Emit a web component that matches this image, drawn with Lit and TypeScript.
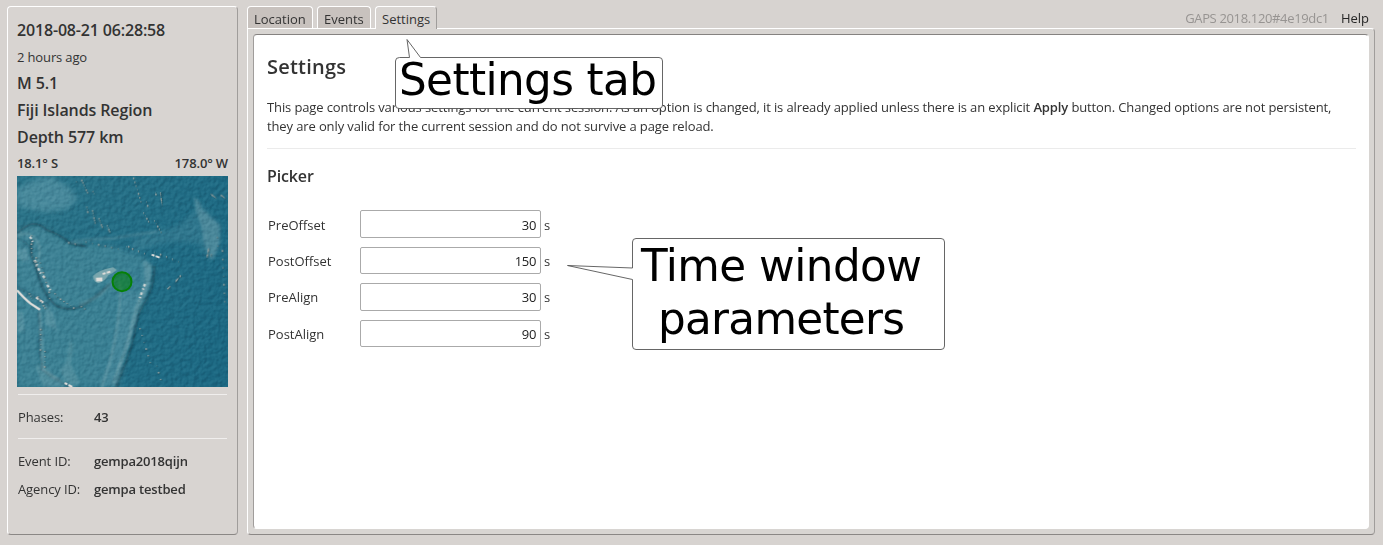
import { LitElement, html, svg, css } from "lit";
import { customElement } from "lit/decorators.js";

// Deterministic speckles scattered along seamount chains.
const chains: number[][] = [
  [205, 30, 248, 75], [232, 110, 260, 155], [265, 148, 300, 185], [365, 30, 410, 110], [440, 65, 462, 100],
  [400, 130, 455, 185], [385, 480, 450, 630], [180, 215, 350, 235], [350, 230, 508, 272], [60, 200, 78, 290],
  [78, 270, 130, 375], [475, 355, 515, 315], [600, 75, 645, 85], [125, 380, 220, 420], [60, 370, 110, 410],
  [90, 480, 105, 590], [590, 240, 600, 260], [625, 200, 650, 390],
];
const specks = chains.flatMap(([x1, y1, x2, y2], c) =>
  Array.from({ length: 9 }, (_, i) => {
    const t = i / 8;
    const j = ((i * 37 + c * 17) % 13) - 6;
    return { x: x1 + (x2 - x1) * t + j, y: y1 + (y2 - y1) * t - j * 0.8, r: 1.1 + ((i * 7 + c) % 4) * 0.45 };
  })
);

@customElement("region-map")
class RegionMap extends LitElement {
  static styles = css`
    :host { display: block; width: 211px; height: 211px; }
    svg { display: block; }
    .relief { mix-blend-mode: soft-light; }
  `;
  render() {
    return html`<svg width="211" height="211" viewBox="21 18 633 633">
      <defs>
        <linearGradient id="sea" x1="0" y1="0.3" x2="1" y2="0.6">
          <stop offset="0" stop-color="#2b7388" /><stop offset=".55" stop-color="#226d85" /><stop offset="1" stop-color="#1c6882" />
        </linearGradient>
        <filter id="b3" filterUnits="userSpaceOnUse" x="0" y="0" width="680" height="680"><feGaussianBlur stdDeviation="2.4" /></filter>
        <filter id="b8" filterUnits="userSpaceOnUse" x="0" y="0" width="680" height="680"><feGaussianBlur stdDeviation="8" /></filter>
        <filter id="b1" filterUnits="userSpaceOnUse" x="0" y="0" width="680" height="680"><feGaussianBlur stdDeviation="1" /></filter>
        <filter id="relief" x="0" y="0" width="1" height="1" color-interpolation-filters="sRGB">
          <feTurbulence type="fractalNoise" baseFrequency="0.07 0.07" numOctaves="3" seed="8" result="n" />
          <feColorMatrix in="n" type="matrix" values="0 0 0 0 0  0 0 0 0 0  0 0 0 0 0  1 0 0 0 0" />
          <feDiffuseLighting surfaceScale="6" lighting-color="#ffffff"><feDistantLight azimuth="225" elevation="30" /></feDiffuseLighting>
        </filter>
      </defs>
      <rect x="21" y="18" width="633" height="633" fill="url(#sea)" />
      <g filter="url(#b8)" fill="#5a98a8">
        <path opacity=".6" d="M21 60 60 35 120 18 180 55 203 88 170 118 110 127 50 115 21 105Z" />
        <path opacity=".42" d="M21 175 65 160 105 170 185 222 300 225 400 260 433 290 415 370 382 430 360 520 328 651H21Z" />
        <path opacity=".25" d="M370 205 500 170 550 130 560 90 590 120 630 165 625 245 600 270 560 220 480 215 370 245Z" />
      </g>
      <g filter="url(#b3)" fill="#79a9b4">
        <path opacity=".38" d="M550 80 567 92 575 115 595 135 630 165 630 215 610 270 595 258 580 215 575 175 558 120Z" />
        <path opacity=".35" d="M21 240 50 235 60 270 40 275 21 260ZM105 400 130 430 142 480 105 465ZM21 420 40 430 45 480 21 490Z" />
        <path opacity=".3" d="M180 505 190 530 182 580 210 640 175 651 150 600 170 570ZM75 590 95 580 130 615 195 651H100Z" />
        <path opacity=".15" d="M333 365 385 365 375 445 345 540 320 651H265L300 560Z" />
        <path opacity=".45" d="M400 270 425 285 422 340 385 430 360 520 335 580 300 651 345 540 380 410 405 340Z" />
      </g>
      <g fill="none" stroke-linecap="round" filter="url(#b3)">
        <path stroke="#123f50" stroke-opacity=".7" stroke-width="6" d="M21 190Q45 165 70 161Q95 163 110 180Q145 190 185 222L225 228M65 210Q58 240 70 270L88 325Q102 380 140 408Q180 428 225 404Q260 380 295 345M433 290Q433 345 412 385Q385 425 380 460Q370 530 328 625L318 651" />
        <path stroke="#174b5e" stroke-opacity=".55" stroke-width="5" d="M25 207Q50 215 62 235M21 350Q70 375 115 405M85 430Q92 480 87 540L96 600Q130 625 180 651" />
        <path stroke="#99b9bf" stroke-opacity=".42" stroke-width="5" d="M21 200Q50 180 75 205Q100 235 80 280L120 355M331 340Q330 430 318 490Q308 560 275 651M408 340Q375 410 364 470Q348 540 310 640M90 425 97 530 100 600 145 630" />
        <path stroke="#82abb5" stroke-opacity=".25" stroke-width="10" d="M190 215Q250 205 310 205Q370 195 440 185M310 330Q270 390 210 400" />
      </g>
      <rect class="relief" x="21" y="18" width="633" height="633" filter="url(#relief)" opacity=".2" />
      <path fill="#89b0b5" opacity=".8" filter="url(#b1)" d="M249 318Q265 300 310 292L320 300Q310 310 295 316Q285 335 265 340Q250 335 249 318Z" />
      <g fill="none" stroke="#e0deda" filter="url(#b1)">
        <path stroke-width="7" d="M21 361Q45 388 62 401L90 419" />
        <path stroke-width="6" stroke-dasharray="9 4 14 7" d="M278 312 301 305M78 382 100 398M425 254 449 263M164 639 187 651" />
        <path stroke-width="7" stroke-dasharray="8 6 4 9" opacity=".85" d="M60 200 70 218M74 270 90 307 105 325M112 345 124 367M405 342 386 393" />
        <path stroke-width="11" d="M258 329 277 328" />
      </g>
      <g>${specks.map((s) => svg`<circle cx=${s.x + 1.5} cy=${s.y + 1.5} r=${s.r + 0.9} fill="#153f4c" opacity=".5"/><circle cx=${s.x} cy=${s.y} r=${s.r + 0.3} fill="#b3b5b0" opacity=".8"/>`)}</g>
      <circle cx="336" cy="335" r="28" fill="#008000" fill-opacity=".5" />
      <circle cx="336" cy="335" r="28.5" fill="none" stroke="#068006" stroke-width="6" />
    </svg>`;
  }
}

@customElement("app-root")
class AppRoot extends LitElement {
  static styles = css`
    :host { display: block; height: 545px; overflow: hidden; background: #d7d3d0; color: #333; font: 13px/19px "Open Sans", sans-serif; }
    * { box-sizing: border-box; }
    .page { display: flex; gap: 9px; height: 545px; padding: 6px 8px 10px 7px; position: relative; }
    .raised { border: 1px solid; border-color: #fff #a09d9b #8a8785 #fff; border-radius: 4px; background: #d8d4d1; }
    .side { width: 231px; padding: 10px 9px 0; }
    .big, .line { height: 27px; line-height: 27px; }
    .big { font-size: 16px; font-weight: 600; letter-spacing: -0.1px; }
    .date { letter-spacing: -0.17px; }
    .line { height: 26px; line-height: 26px; letter-spacing: -0.14px; }
    .coords { display: flex; justify-content: space-between; font-weight: 600; height: 25px; line-height: 25px; }
    .rule { height: 1px; background: #f0eeed; margin: 7px 1px 0; }
    .fact { display: grid; grid-template-columns: 76px 1fr; height: 28px; line-height: 28px; padding-left: 1px; letter-spacing: -0.1px; }
    .fact b { letter-spacing: -0.18px; }
    .first { margin-top: 8px; }
    b { font-weight: 600; }
    .main { flex: 1; display: flex; flex-direction: column; min-width: 0; }
    .tabs { display: flex; height: 22px; gap: 4px; }
    .tab { height: 22px; border: 1px solid #fff; border-bottom: 0; border-radius: 4px 4px 0 0; background: #c8c2be; padding: 0 6px; line-height: 25px; white-space: nowrap; }
    .location { width: 66px; } .events { width: 54px; }
    .active { width: 62px; height: 23px; background: #d8d4d1; border-right-color: #a09d9b; z-index: 1; }
    .meta { margin-left: auto; display: flex; gap: 12px; padding-right: 6px; line-height: 25px; color: #262626; }
    .version { color: #979492; letter-spacing: -0.35px; }
    .frame { flex: 1; padding: 5px; border-radius: 0 4px 4px 4px; background: #d8d5d2; }
    .sheet { height: 100%; background: #fff; border: 1px solid; border-color: #858280 #fff #fff #a09d9b; border-radius: 4px; padding: 19px 12px 0 13px; }
    h1 { margin: 0; font-size: 20px; line-height: 26px; font-weight: 600; letter-spacing: 0.22px; }
    p { margin: 18px 0 0; white-space: nowrap; letter-spacing: -0.121px; }
    .divider { height: 1px; background: #ebebeb; margin-top: 12px; }
    h2 { margin: 16px 0 0; font-size: 16px; line-height: 22px; font-weight: 600; letter-spacing: -0.15px; }
    .form { display: grid; grid-template: 28px 27px 28px 27px / 92px 181px 12px; row-gap: 9px; margin: 23px 0 0 1px; line-height: 28px; }
    .form span:nth-child(-n+3) { padding-top: 1px; }
    input { width: 181px; height: 100%; border: 1px solid #aaa; border-radius: 2px; padding: 1px 4px 0; text-align: right; font: inherit; line-height: 22px; letter-spacing: -0.35px; color: #222; background: #fff; outline: 0; }
    input:nth-child(2) { padding-top: 2px; }
    input:nth-child(8) { padding-top: 0; }
    .unit { padding-left: 3px; }
    .callout { position: absolute; display: block; z-index: 2; overflow: visible; }
    .tab-note { left: 395px; top: 38px; }
    .time-note { left: 566px; top: 237px; }
    .bubble { fill: #fff; stroke: #555; stroke-width: 0.9; }
    .note { font-family: "DejaVu Sans", sans-serif; font-size: 43.7px; fill: #000; }
  `;
  render() {
    const fields = [["PreOffset", "30"], ["PostOffset", "150"], ["PreAlign", "30"], ["PostAlign", "90"]];
    return html`<div class="page">
      <aside class="side raised">
        <div class="big date">2018-08-21 06:28:58</div>
        <div class="line">2 hours ago</div>
        <div class="big">M 5.1</div>
        <div class="big">Fiji Islands Region</div>
        <div class="big">Depth 577 km</div>
        <div class="line coords"><span>18.1° S</span><span>178.0° W</span></div>
        <region-map></region-map>
        <div class="rule"></div>
        <div class="fact first"><span>Phases:</span><b>43</b></div>
        <div class="rule"></div>
        <div class="fact first"><span>Event ID:</span><b>gempa2018qijn</b></div>
        <div class="fact"><span>Agency ID:</span><b>gempa testbed</b></div>
      </aside>
      <main class="main">
        <nav class="tabs">
          <div class="tab location">Location</div><div class="tab events">Events</div><div class="tab active">Settings</div>
          <div class="meta"><span class="version">GAPS 2018.120#4e19dc1</span><span>Help</span></div>
        </nav>
        <div class="frame raised"><section class="sheet">
          <h1>Settings</h1>
          <p>This page controls various settings for the current session. As an option is changed, it is already applied unless there is an explicit <b>Apply</b> button. Changed options are not persistent,<br />they are only valid for the current session and do not survive a page reload.</p>
          <div class="divider"></div>
          <h2>Picker</h2>
          <div class="form">${fields.map(([label, value]) => html`<span>${label}</span><input .value=${value} /><span class="unit">s</span>`)}</div>
        </section></div>
      </main>
      <svg class="callout tab-note" width="270" height="72">
        <path class="bubble" d="M4.5 19.5H14.5L12 1.5 25.5 19.5H264Q267.500 19.500 267.500 23V67Q267.500 70.500 264 70.500H4Q.5 70.500 .5 67V23Q.5 19.500 4.500 19.500Z" />
        <text class="note" x="4" y="57" textLength="258">Settings tab</text>
      </svg>
      <svg class="callout time-note" width="380" height="114">
        <path class="bubble" d="M70 1.500H375Q378.500 1.500 378.500 5V109Q378.500 112.500 375 112.500H70Q66.500 112.500 66.500 109V42.500L1.500 28.500 66.500 31V5Q66.500 1.500 70 1.500Z" />
        <text class="note" x="75" y="44" textLength="281">Time window</text>
        <text class="note" x="92" y="97" textLength="247">parameters</text>
      </svg>
    </div>`;
  }
}
